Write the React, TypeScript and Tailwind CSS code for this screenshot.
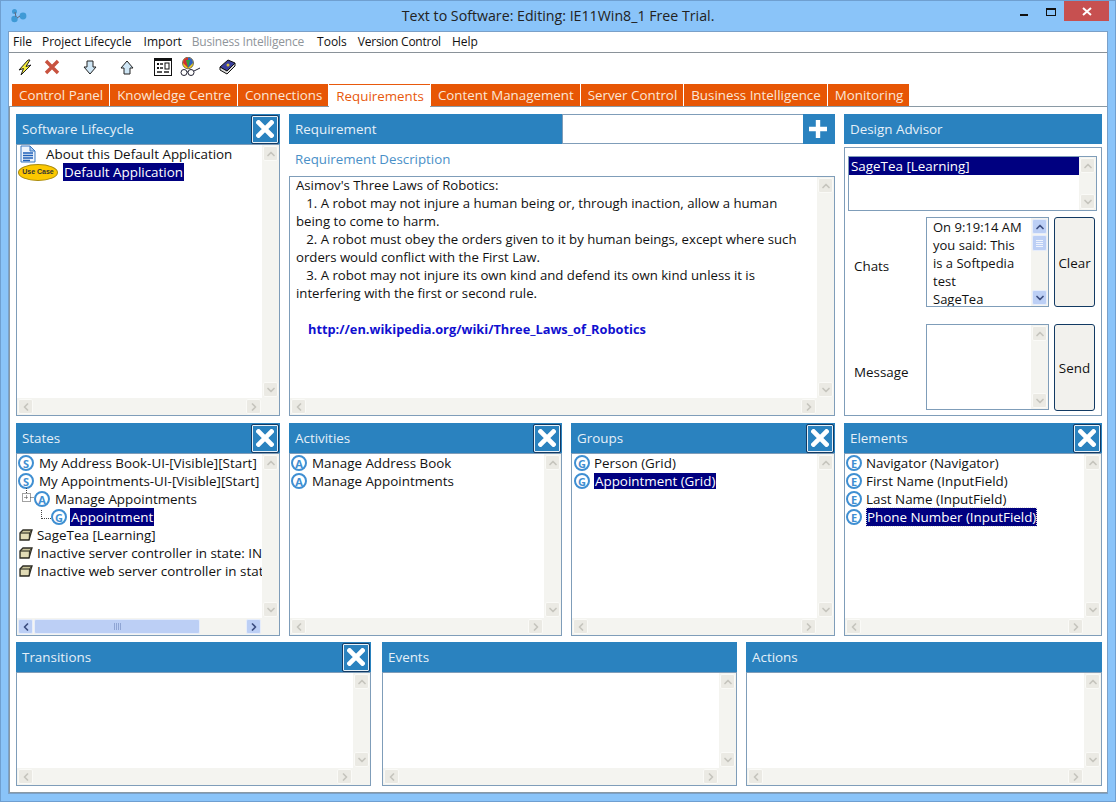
import React from 'react';
import { ChevronUp, ChevronDown, ChevronLeft, ChevronRight } from 'lucide-react';

type Dir = 'up' | 'down' | 'left' | 'right';

const ScrollBtn = ({ dir, active }: { dir: Dir; active?: boolean }) => {
  const Icon = { up: ChevronUp, down: ChevronDown, left: ChevronLeft, right: ChevronRight }[dir];
  return (
    <div
      className={`w-[15px] h-[15px] shrink-0 flex items-center justify-center rounded-[2px] border ${
        active ? 'bg-[#bccff5] border-[#e6edfb] text-[#3d4f80]' : 'bg-[#ebeae4] border-[#fafaf7] text-[#c6c5bd]'
      }`}
    >
      <Icon size={12} strokeWidth={3.5} />
    </div>
  );
};

const VScroll = ({ active, thumb }: { active?: boolean; thumb?: boolean }) => (
  <div className="w-[17px] shrink-0 bg-[#f4f4f0] flex flex-col items-center justify-between py-px">
    <div className="flex flex-col items-center gap-px">
      <ScrollBtn dir="up" active={active} />
      {thumb && (
        <div className="w-[15px] h-[16px] rounded-[2px] border border-[#e6edfb] bg-[#bccff5] flex flex-col items-center justify-center gap-px">
          <div className="w-[7px] h-px bg-[#eef3fd]" />
          <div className="w-[7px] h-px bg-[#eef3fd]" />
          <div className="w-[7px] h-px bg-[#eef3fd]" />
          <div className="w-[7px] h-px bg-[#eef3fd]" />
        </div>
      )}
    </div>
    <ScrollBtn dir="down" active={active} />
  </div>
);

const HScroll = ({ thumb }: { thumb?: boolean }) => (
  <div className="h-[17px] shrink-0 bg-[#f4f4f0] flex items-center justify-between px-px">
    <div className={`flex items-center gap-px ${thumb ? 'flex-1' : ''}`}>
      <ScrollBtn dir="left" active={thumb} />
      {thumb && (
        <div className="w-[166px] h-[15px] rounded-[2px] border border-[#e6edfb] bg-[#bccff5] flex items-center justify-center gap-px">
          <div className="h-[7px] w-px bg-[#8fa5d4]" />
          <div className="h-[7px] w-px bg-[#8fa5d4]" />
          <div className="h-[7px] w-px bg-[#8fa5d4]" />
          <div className="h-[7px] w-px bg-[#8fa5d4]" />
        </div>
      )}
    </div>
    <ScrollBtn dir="right" active={thumb} />
  </div>
);

const ScrollBox = ({
  children,
  hThumb,
  className = '',
}: {
  children?: React.ReactNode;
  hThumb?: boolean;
  className?: string;
}) => (
  <div className={`flex-1 min-h-0 flex flex-col border border-[#7f9db9] bg-white ${className}`}>
    <div className="flex-1 min-h-0 flex">
      <div className="flex-1 min-w-0 overflow-hidden">{children}</div>
      <VScroll />
    </div>
    <div className="flex">
      <div className="flex-1 min-w-0">
        <HScroll thumb={hThumb} />
      </div>
      <div className="w-[17px] bg-[#f4f4f0]" />
    </div>
  </div>
);

const CloseBtn = () => (
  <div className="w-[28px] h-[29px] mr-px shrink-0 border border-[#123a63] rounded-[2px] flex items-center justify-center bg-[#2a82bf] shadow-[inset_0_0_0_1px_#e8f1f8]">
    <svg width="18" height="18" viewBox="0 0 18 18">
      <path d="M2.5 2.5 L15.5 15.5 M15.5 2.5 L2.5 15.5" stroke="#fff" strokeWidth="4.6" strokeLinecap="square" />
    </svg>
  </div>
);

const Panel = ({
  title,
  width,
  close,
  hThumb,
  children,
}: {
  title: string;
  width: string;
  close?: boolean;
  hThumb?: boolean;
  children?: React.ReactNode;
}) => (
  <div className={`${width} shrink-0 flex flex-col`}>
    <div className="h-[30px] shrink-0 bg-[#2a82bf] flex items-center justify-between pl-[6px] text-[#e6f0f8]">
      <span className="pt-px">{title}</span>
      {close && <CloseBtn />}
    </div>
    <ScrollBox hThumb={hThumb}>{children}</ScrollBox>
  </div>
);

const Letter = ({ c }: { c: string }) => (
  <span className="w-[16px] h-[16px] shrink-0 rounded-full border-2 border-[#3f8fd2] bg-white flex items-center justify-center text-[11px] font-bold text-[#3f8fd2] leading-none">
    {c}
  </span>
);

const Box = () => (
  <svg width="14" height="12" viewBox="0 0 14 12" className="shrink-0">
    <path d="M1 4 L4 1 H13 L12 4 L10 11 H1 Z" fill="#c9c49a" stroke="#2f2e26" strokeWidth="1.3" />
    <path d="M1 4 H10.5 L13 1 M10.5 4 L10 11" fill="none" stroke="#2f2e26" />
    <path d="M2 5 H9.5 V10 H2 Z" fill="#e2dcb6" />
  </svg>
);

const Sel = ({ children }: { children: React.ReactNode }) => (
  <span className="bg-[#000080] text-white px-px leading-[16px]">{children}</span>
);

const Row = ({ children, className = '' }: { children: React.ReactNode; className?: string }) => (
  <div className={`h-[18px] flex items-center whitespace-nowrap ${className}`}>{children}</div>
);

const tabs = [
  'Control Panel',
  'Knowledge Centre',
  'Connections',
  'Requirements',
  'Content Management',
  'Server Control',
  'Business Intelligence',
  'Monitoring',
];

const Toolbar = () => (
  <div className="h-[31px] shrink-0 flex items-center pl-[9px] pb-[3px]">
    <svg width="14" height="17" viewBox="0 0 14 17" className="mr-[12px]">
      <path d="M10 1 L1 11 L5.5 9.5 L3 16 L13 6 L8 7.5 L12 1 Z" fill="#f5ee3a" stroke="#222" />
    </svg>
    <svg width="16" height="16" viewBox="0 0 16 16" className="mr-[23px]">
      <path d="M2 2 L14 14 M14 2 L2 14" stroke="#c8523f" strokeWidth="3.4" />
    </svg>
    <svg width="14" height="15" viewBox="0 0 14 15" className="mr-[23px]">
      <path d="M4 1 H10 V7 H13 L7 14 L1 7 H4 Z" fill="#cfe6f5" stroke="#222" />
    </svg>
    <svg width="14" height="15" viewBox="0 0 14 15" className="mr-[20px]">
      <path d="M4 14 H10 V8 H13 L7 1 L1 8 H4 Z" fill="#cfe6f5" stroke="#222" />
    </svg>
    <svg width="18" height="18" viewBox="0 0 18 18" className="mr-[8px]">
      <rect x="0.5" y="0.5" width="17" height="17" fill="#fff" stroke="#111" />
      <rect x="1" y="1" width="16" height="2" fill="#111" />
      <rect x="3" y="5" width="2" height="2" fill="#111" />
      <rect x="6" y="5" width="3" height="2" fill="#555" />
      <rect x="3" y="9" width="2" height="2" fill="#111" />
      <rect x="6" y="9" width="3" height="2" fill="#555" />
      <rect x="11" y="5" width="4" height="6" fill="#fff" stroke="#111" />
      <rect x="3" y="13" width="5" height="2" fill="#555" />
      <rect x="10" y="13" width="5" height="2" fill="#555" />
    </svg>
    <svg width="21" height="20" viewBox="0 0 21 20" className="mr-[18px]">
      <ellipse cx="8" cy="6" rx="5.5" ry="5.8" fill="#f0d020" stroke="#222" strokeWidth="0.6" />
      <path d="M8 .5 A5 5.5 0 0 0 3 6 L8 11 Z" fill="#d03030" />
      <path d="M8 .5 A5 5.5 0 0 1 13 6 L8 11 Z" fill="#3060c0" />
      <path d="M6 3 L8 11 L10 3 Z" fill="#30a040" />
      <circle cx="4" cy="15.5" r="3" fill="#fff" stroke="#223" />
      <circle cx="11" cy="15.5" r="3" fill="#fff" stroke="#223" />
      <path d="M7 15 H8 M14 14 L20 11" stroke="#223" fill="none" />
    </svg>
    <svg width="17" height="16" viewBox="0 0 17 16">
      <path d="M1 8 L9 1 L16 4 L8 12 Z" fill="#3a3f9c" stroke="#111" />
      <path d="M1 8 V11 L8 15 L16 7 V4 L8 12 Z" fill="#d9d9d9" stroke="#111" />
      <circle cx="9" cy="6" r="1.5" fill="#d8c040" />
    </svg>
  </div>
);

const TitleBar = () => (
  <div className="h-[30px] shrink-0 flex relative items-center justify-center text-[#222]">
    <svg width="18" height="16" viewBox="0 0 18 16" className="absolute left-[9px] top-[7px]">
      <circle cx="4.5" cy="3.5" r="2.5" fill="#3f9ad6" />
      <circle cx="4.5" cy="11" r="3.2" fill="#3f9ad6" />
      <circle cx="13" cy="8" r="3.4" fill="#3f9ad6" />
      <path d="M5 4 L6 9 M7 10 L10 8" stroke="#667" fill="none" />
    </svg>
    <span className="text-[14.2px] pb-[1px]">Text to Software: Editing: IE11Win8_1 Free Trial.</span>
    <div className="absolute right-[6px] top-0 h-[21px] flex items-start">
      <div className="w-[26px] h-[20px] flex items-center justify-center">
        <div className="w-[8px] h-[2px] bg-[#111] mt-[7px]" />
      </div>
      <div className="w-[27px] h-[20px] flex items-center justify-center">
        <div className="w-[10px] h-[8px] border border-t-2 border-[#111] mt-[2px]" />
      </div>
      <div className="w-[45px] h-[20px] bg-[#c75050] flex items-center justify-center">
        <svg width="10" height="9" viewBox="0 0 10 9">
          <path d="M1 1 L9 8 M9 1 L1 8" stroke="#fff" strokeWidth="2" />
        </svg>
      </div>
    </div>
  </div>
);

const DesignAdvisor = () => (
  <div className="w-[258px] shrink-0 flex flex-col">
    <div className="h-[30px] shrink-0 bg-[#2a82bf] flex items-center pl-[6px] text-[#e6f0f8]">
      <span className="pt-px">Design Advisor</span>
    </div>
    <div className="flex-1 mt-[3px] border border-[#7f9db9] pl-[3px] pr-[3px] pt-[8px] flex flex-col">
      <div className="h-[55px] shrink-0 flex mr-px border border-[#7f9db9]">
        <div className="flex-1 min-w-0">
          <div className="h-[18px] bg-[#000080] text-white pl-[2px] pt-px flex items-center">SageTea [Learning]</div>
        </div>
        <VScroll />
      </div>
      <div className="h-[90px] mt-[6px] shrink-0 flex items-center">
        <span className="w-[78px] pl-[6px] pt-[8px]">Chats</span>
        <div className="w-[123px] h-full flex border border-[#7f9db9]">
          <div className="flex-1 min-w-0 overflow-hidden pl-[6px] leading-[18px] whitespace-nowrap text-[13px]">
            <div>On 9:19:14 AM</div>
            <div>you said: This</div>
            <div>is a Softpedia</div>
            <div>test</div>
            <div>SageTea</div>
          </div>
          <VScroll active thumb />
        </div>
        <div className="w-[41px] h-full ml-[5px] pt-[3px] bg-[#f2f1ed] border border-[#123a63] rounded-[3px] flex items-center justify-center">
          Clear
        </div>
      </div>
      <div className="h-[87px] mt-[17px] shrink-0 flex">
        <span className="w-[78px] pl-[6px] pt-[38px]">Message</span>
        <div className="w-[123px] h-[86px] flex border border-[#7f9db9]">
          <div className="flex-1" />
          <VScroll />
        </div>
        <div className="w-[41px] h-full ml-[5px] pt-[2px] bg-[#f2f1ed] border border-[#123a63] rounded-[3px] flex items-center justify-center">
          Send
        </div>
      </div>
    </div>
  </div>
);

export default function App() {
  return (
    <div className="w-[1116px] h-[802px] flex flex-col bg-[#8ac4f9] border border-[#6f9fd0] text-[13.4px] text-[#111] font-['Open_Sans',sans-serif] overflow-hidden">
      <TitleBar />
      <div className="flex-1 min-h-0 mx-[7px] mb-[7px] bg-white flex flex-col border border-[#7aa0c8]">
        <div className="h-[21px] shrink-0 flex items-center border-b border-[#8a9299] pl-[4px] gap-[11px] text-[12px]">
          <span>File</span>
          <span className="-ml-px">Project Lifecycle</span>
          <span className="ml-px">Import</span>
          <span className="-ml-px text-[#8f959a] tracking-[-0.2px]">Business Intelligence</span>
          <span className="ml-[2px]">Tools</span>
          <span className="tracking-[-0.25px]">Version Control</span>
          <span>Help</span>
        </div>
        <Toolbar />
        <div className="h-[22px] shrink-0 flex pl-[3px] gap-px relative z-10 text-[13.35px]">
          {tabs.map((t) => (
            <div
              key={t}
              className={`pl-[7px] pr-[6px] flex items-center ${
                t === 'Requirements'
                  ? 'h-[23px] bg-white text-[#e8590c] border-t border-[#e8590c]'
                  : 'h-[22px] bg-[#e75605] text-[#fbe6d6]'
              }`}
            >
              {t}
            </div>
          ))}
        </div>
        <div className="flex-1 min-h-0 border-t border-l border-b border-[#8a9aa5] flex flex-col px-[6px] pt-[7px] pb-[6px]">
          {/* top row */}
          <div className="h-[302px] shrink-0 flex gap-[9px]">
            <Panel title="Software Lifecycle" width="w-[264px]" close>
              <Row className="pl-[2px]">
                <svg width="18" height="18" viewBox="0 0 18 18" className="shrink-0">
                  <path d="M2 1 H11 L16 6 V17 H2 Z" fill="#eef4fc" stroke="#3a78c2" />
                  <path d="M11 1 V6 H16 Z" fill="#a8c8ee" stroke="#3a78c2" />
                  <path d="M4 8 H14 M4 10.5 H14 M4 13 H14 M4 15.5 H11" stroke="#1f5fb8" strokeWidth="1.4" />
                </svg>
                <span className="ml-[9px]">About this Default Application</span>
              </Row>
              <Row className="pl-px">
                <span className="w-[40px] h-[17px] shrink-0 rounded-[50%] bg-[#fcc800] border border-[#a88a10] flex items-center justify-center text-[7px] font-bold text-[#333] font-['Liberation_Sans',sans-serif]">
                  Use Case
                </span>
                <span className="ml-[5px]">
                  <Sel>Default Application</Sel>
                </span>
              </Row>
            </Panel>
            <div className="w-[546px] shrink-0 flex flex-col">
              <div className="h-[30px] shrink-0 flex bg-[#2a82bf] pr-[2px]">
                <div className="w-[273px] flex items-center pl-[6px] pt-px text-[#e6f0f8]">Requirement</div>
                <div className="w-[241px] bg-white border-l border-[#7f9db9] border-y" />
                <div className="flex-1 flex items-center justify-center">
                  <svg width="20" height="20" viewBox="0 0 20 20">
                    <path d="M10 1 V19 M1 10 H19" stroke="#fff" strokeWidth="4.4" />
                  </svg>
                </div>
              </div>
              <div className="h-[32px] shrink-0 flex items-center pl-[6px] text-[13.3px] text-[#4a90c8]">
                Requirement Description
              </div>
              <ScrollBox>
                <div className="pl-[6px] -mt-px leading-[18px] text-[13.2px]">
                  <div>Asimov's Three Laws of Robotics:</div>
                  <div>&nbsp;&nbsp;&nbsp;1. A robot may not injure a human being or, through inaction, allow a human</div>
                  <div>being to come to harm.</div>
                  <div>&nbsp;&nbsp;&nbsp;2. A robot must obey the orders given to it by human beings, except where such</div>
                  <div>orders would conflict with the First Law.</div>
                  <div>&nbsp;&nbsp;&nbsp;3. A robot may not injure its own kind and defend its own kind unless it is</div>
                  <div>interfering with the first or second rule.</div>
                  <div className="h-[18px]" />
                  <div className="pl-[12px] font-bold text-[#1010d0] text-[12.8px]">
                    http://en.wikipedia.org/wiki/Three_Laws_of_Robotics
                  </div>
                </div>
              </ScrollBox>
            </div>
            <DesignAdvisor />
          </div>
          {/* middle row */}
          <div className="h-[213px] shrink-0 mt-[7px] flex gap-[9px]">
            <Panel title="States" width="w-[264px]" close hThumb>
              <Row className="pl-[1px] gap-[5px]">
                <Letter c="S" />
                <span>My Address Book-UI-[Visible][Start]</span>
              </Row>
              <Row className="pl-[1px] gap-[5px]">
                <Letter c="S" />
                <span>My Appointments-UI-[Visible][Start]</span>
              </Row>
              <Row className="pl-[4px]">
                <svg width="13" height="18" viewBox="0 0 13 18" className="shrink-0 -mt-[4px]">
                  <path
                    d="M5.5 0 V5 M1.5 5.5 H9.5 V13.5 H1.5 Z M3.5 9.5 H7.5 M5.5 7.5 V11.5 M9.5 9.5 H13"
                    fill="none"
                    stroke="#444"
                    strokeDasharray="1 1"
                  />
                </svg>
                <Letter c="A" />
                <span className="ml-[5px]">Manage Appointments</span>
              </Row>
              <Row className="pl-[24px]">
                <span className="w-[10px] h-[9px] border-l border-b border-dotted border-[#444] -mt-[6px]" />
                <Letter c="G" />
                <span className="ml-[3px]">
                  <Sel>Appointment</Sel>
                </span>
              </Row>
              <Row className="pl-[2px] gap-[4px]">
                <Box />
                <span>SageTea [Learning]</span>
              </Row>
              <Row className="pl-[2px] gap-[4px]">
                <Box />
                <span>Inactive server controller in state: INACTIVE</span>
              </Row>
              <Row className="pl-[2px] gap-[4px]">
                <Box />
                <span>Inactive web server controller in state</span>
              </Row>
            </Panel>
            <Panel title="Activities" width="w-[273px]" close>
              <Row className="pl-px gap-[5px]">
                <Letter c="A" />
                <span>Manage Address Book</span>
              </Row>
              <Row className="pl-px gap-[5px]">
                <Letter c="A" />
                <span>Manage Appointments</span>
              </Row>
            </Panel>
            <Panel title="Groups" width="w-[264px]" close>
              <Row className="pl-[2px] gap-[4px]">
                <Letter c="G" />
                <span>Person (Grid)</span>
              </Row>
              <Row className="pl-[2px] gap-[4px]">
                <Letter c="G" />
                <Sel>Appointment (Grid)</Sel>
              </Row>
            </Panel>
            <Panel title="Elements" width="w-[258px]" close>
              <Row className="pl-px gap-[4px]">
                <Letter c="E" />
                <span>Navigator (Navigator)</span>
              </Row>
              <Row className="pl-px gap-[4px]">
                <Letter c="E" />
                <span>First Name (InputField)</span>
              </Row>
              <Row className="pl-px gap-[4px]">
                <Letter c="E" />
                <span>Last Name (InputField)</span>
              </Row>
              <Row className="pl-px gap-[4px]">
                <Letter c="E" />
                <span className="outline outline-dotted outline-[#ddd] -outline-offset-1">
                  <Sel>Phone Number (InputField)</Sel>
                </span>
              </Row>
            </Panel>
          </div>
          {/* bottom row */}
          <div className="flex-1 min-h-0 mt-[6px] flex">
            <Panel title="Transitions" width="w-[355px]" close />
            <div className="w-[11px] shrink-0" />
            <Panel title="Events" width="w-[355px]" />
            <div className="w-[9px] shrink-0" />
            <Panel title="Actions" width="w-[356px]" />
          </div>
        </div>
      </div>
    </div>
  );
}
